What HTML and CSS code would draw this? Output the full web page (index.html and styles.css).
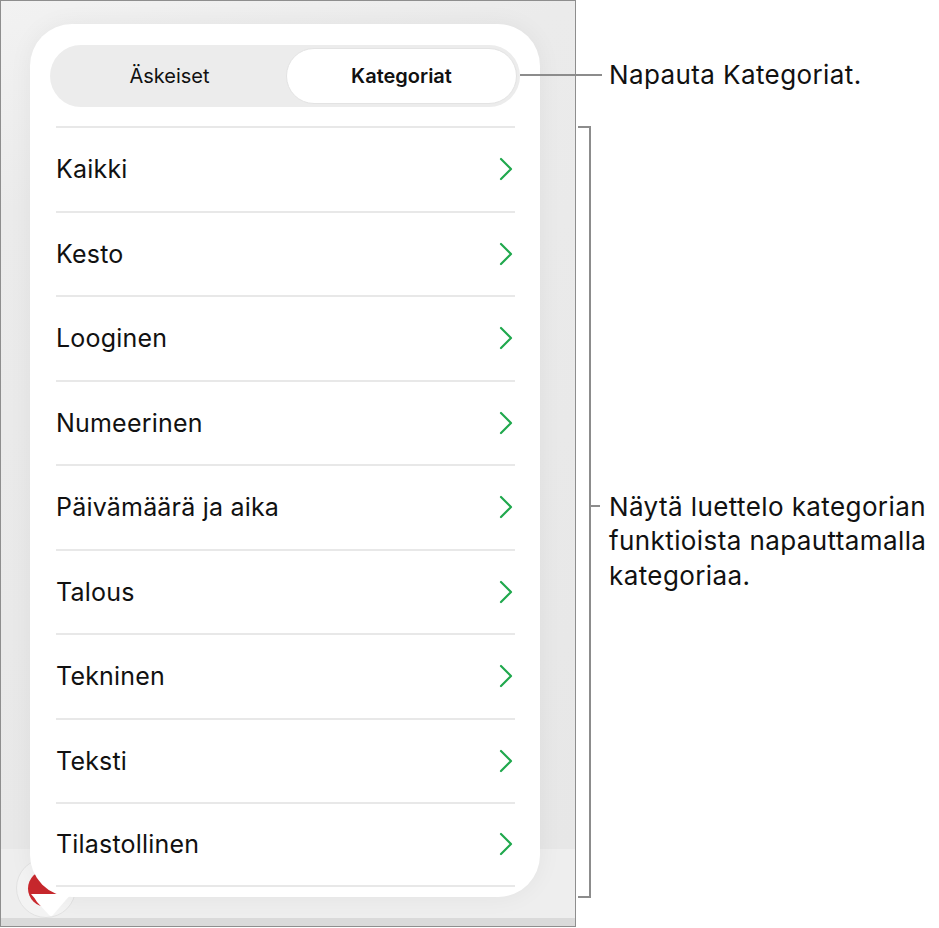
FILE: index.html
```html
<!DOCTYPE html>
<html lang="fi">
<head>
    <meta charset="UTF-8">
    <meta name="viewport" content="width=device-width, initial-scale=1.0">
    <title>Kategoriat</title>
    <link rel="stylesheet" href="styles.css">
</head>
<body>
    <div class="page">
        <div class="screen">
            <div class="screen-main"></div>
            <div class="toolbar"></div>
            <div class="toolbar-edge"></div>

            <div class="record-button"><span class="record-dot"></span></div>

            <div class="popover">
                <div class="segmented">
                    <button class="segment">Äskeiset</button>
                    <button class="segment active">Kategoriat</button>
                </div>
                <ul class="category-list">
                    <li>Kaikki <svg class="chevron" viewBox="0 0 14 24"><polyline points="2,2 12,12 2,22"/></svg></li>
                    <li>Kesto <svg class="chevron" viewBox="0 0 14 24"><polyline points="2,2 12,12 2,22"/></svg></li>
                    <li>Looginen <svg class="chevron" viewBox="0 0 14 24"><polyline points="2,2 12,12 2,22"/></svg></li>
                    <li>Numeerinen <svg class="chevron" viewBox="0 0 14 24"><polyline points="2,2 12,12 2,22"/></svg></li>
                    <li>Päivämäärä ja aika <svg class="chevron" viewBox="0 0 14 24"><polyline points="2,2 12,12 2,22"/></svg></li>
                    <li>Talous <svg class="chevron" viewBox="0 0 14 24"><polyline points="2,2 12,12 2,22"/></svg></li>
                    <li>Tekninen <svg class="chevron" viewBox="0 0 14 24"><polyline points="2,2 12,12 2,22"/></svg></li>
                    <li>Teksti <svg class="chevron" viewBox="0 0 14 24"><polyline points="2,2 12,12 2,22"/></svg></li>
                    <li>Tilastollinen <svg class="chevron" viewBox="0 0 14 24"><polyline points="2,2 12,12 2,22"/></svg></li>
                </ul>
                <svg class="popover-tail" viewBox="0 0 42 24"><path d="M0 0 L42 0 Q38 2 34 7 L22 21 Q20 23 18 21 L6 8 Q3 3 0 0 Z"/></svg>
            </div>
        </div>

        <div class="notes">
            <p class="note note-tab">Napauta Kategoriat.</p>
            <p class="note note-list">Näytä luettelo kategorian<br>funktioista napauttamalla<br>kategoriaa.</p>
        </div>

        <!-- callout lines -->
        <div class="callout-line"></div>
        <div class="bracket"></div>
        <div class="bracket-tick"></div>
    </div>
</body>
</html>
```

FILE: styles.css
```css
body {
    margin: 0;
    background-color: #fff;
    font-family: Inter, "Liberation Sans", sans-serif;
    color: #111;
}
.page {
    position: relative;
    display: flex;
    width: 939px;
    height: 928px;
}
.screen {
    position: relative;
    display: flex;
    flex-direction: column;
    flex-shrink: 0;
    width: 576px;
    height: 927px;
    box-sizing: border-box;
    border: 1px solid #8e8e8e;
    overflow: hidden;
}
.screen-main {
    flex: 1;
    background: linear-gradient(160deg, #f2f2f2 0%, #ebebeb 20%, #e7e7e7 100%);
}
.toolbar {
    height: 69px;
    background-color: #eeeeee;
}
.toolbar-edge {
    height: 8px;
    background-color: #dadada;
}
.record-button {
    position: absolute;
    left: 15px;
    top: 857px;
    width: 60px;
    height: 60px;
    border-radius: 50%;
    background-color: #f3f3f3;
    border: 1px solid #e2e2e2;
    box-sizing: border-box;
    display: flex;
    align-items: center;
    justify-content: center;
}
.record-dot {
    width: 37px;
    height: 37px;
    border-radius: 50%;
    background-color: #c9282d;
}
.popover {
    position: absolute;
    left: 29px;
    top: 23px;
    width: 510px;
    height: 873px;
    box-sizing: border-box;
    padding: 21px 20px 0 20px;
    background-color: #fff;
    border-radius: 42px;
    box-shadow: 0 0 24px rgba(0, 0, 0, 0.05);
}
.popover-tail {
    position: absolute;
    left: 1px;
    bottom: -21px;
    width: 42px;
    height: 24px;
    fill: #fff;
}
.segmented {
    display: flex;
    height: 62px;
    padding: 3px;
    box-sizing: border-box;
    background-color: #ececec;
    border-radius: 31px;
}
.segment {
    flex: 1;
    border: none;
    background: none;
    font-family: inherit;
    font-size: 20px;
    color: #111;
    border-radius: 28px;
    padding: 0;
}
.segment.active {
    flex: 0 0 231px;
    background-color: #fff;
    border: 1px solid #e3e3e3;
    font-weight: 600;
}
.category-list {
    list-style: none;
    margin: 19px 5px 0 6px;
    padding: 0;
}
.category-list li {
    display: flex;
    align-items: center;
    justify-content: space-between;
    height: 84.5px;
    box-sizing: border-box;
    border-top: 2px solid #e8e8e8;
    padding-right: 2px;
    font-size: 25px;
    letter-spacing: 0.2px;
}
.category-list li:last-child {
    border-bottom: 2px solid #e8e8e8;
}
.chevron {
    width: 14px;
    height: 24px;
    fill: none;
    stroke: #20a84d;
    stroke-width: 2.2;
    stroke-linecap: round;
    stroke-linejoin: round;
}
.notes {
    display: flex;
    flex-direction: column;
    padding-left: 33px;
}
.note {
    margin: 0;
    font-size: 26px;
    letter-spacing: 0.4px;
    line-height: 34.5px;
    white-space: nowrap;
    color: #111;
}
.note-tab {
    margin-top: 58px;
}
.note-list {
    margin-top: 397px;
}
.callout-line {
    position: absolute;
    left: 520px;
    top: 74px;
    width: 82px;
    height: 2px;
    background-color: #8c8c8c;
}
.bracket {
    position: absolute;
    left: 578px;
    top: 126px;
    width: 11px;
    height: 768px;
    border: 2px solid #8c8c8c;
    border-left: none;
}
.bracket-tick {
    position: absolute;
    left: 591px;
    top: 505px;
    width: 9px;
    height: 2px;
    background-color: #8c8c8c;
}
```
